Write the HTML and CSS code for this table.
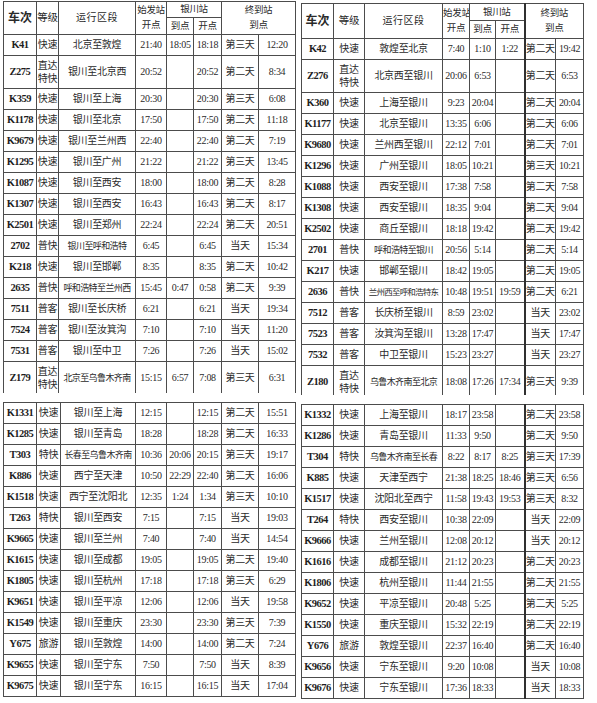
FILE: index.html
```html
<!DOCTYPE html>
<html lang="zh-CN">
<head>
<meta charset="utf-8">
<title>银川站列车时刻表</title>
<link rel="stylesheet" href="styles.css">
</head>
<body>
<div class="page">
  <div class="col col-left">
    <div class="clip clip-left">
      <table class="tt tl">
        <colgroup><col style="width:33px"><col style="width:22px"><col style="width:77px"><col style="width:31px"><col style="width:27px"><col style="width:28px"><col style="width:37px"><col style="width:37px"></colgroup>
        <thead>
          <tr class="h1"><th rowspan="2" class="hno">车次</th><th rowspan="2" class="hg">等级</th><th rowspan="2" class="hr">运行区段</th><th rowspan="2" class="hs">始发站<br>开点</th><th colspan="2" class="hs">银川站</th><th rowspan="2" colspan="2" class="hs">终到站<br>到点</th></tr>
          <tr class="h2"><th class="hs">到点</th><th class="hs">开点</th></tr>
        </thead>
        <tbody>
          <tr><td class="no">K41</td><td>快速</td><td>北京至敦煌</td><td>21:40</td><td>18:05</td><td>18:18</td><td>第三天</td><td>12:20</td></tr>
          <tr class="tall"><td class="no">Z275</td><td class="two">直达<br>特快</td><td>银川至北京西</td><td>20:52</td><td></td><td>20:52</td><td>第二天</td><td>8:34</td></tr>
          <tr><td class="no">K359</td><td>快速</td><td>银川至上海</td><td>20:30</td><td></td><td>20:30</td><td>第三天</td><td>6:08</td></tr>
          <tr><td class="no">K1178</td><td>快速</td><td>银川至北京</td><td>17:50</td><td></td><td>17:50</td><td>第二天</td><td>11:18</td></tr>
          <tr><td class="no">K9679</td><td>快速</td><td>银川至兰州西</td><td>22:40</td><td></td><td>22:40</td><td>第二天</td><td>7:19</td></tr>
          <tr><td class="no">K1295</td><td>快速</td><td>银川至广州</td><td>21:22</td><td></td><td>21:22</td><td>第三天</td><td>13:45</td></tr>
          <tr><td class="no">K1087</td><td>快速</td><td>银川至西安</td><td>18:00</td><td></td><td>18:00</td><td>第二天</td><td>8:28</td></tr>
          <tr><td class="no">K1307</td><td>快速</td><td>银川至西安</td><td>16:43</td><td></td><td>16:43</td><td>第二天</td><td>8:17</td></tr>
          <tr><td class="no">K2501</td><td>快速</td><td>银川至郑州</td><td>22:24</td><td></td><td>22:24</td><td>第二天</td><td>20:51</td></tr>
          <tr><td class="no">2702</td><td>普快</td><td class="lg">银川至呼和浩特</td><td>6:45</td><td></td><td>6:45</td><td>当天</td><td>15:34</td></tr>
          <tr><td class="no">K218</td><td>快速</td><td>银川至邯郸</td><td>8:35</td><td></td><td>8:35</td><td>第二天</td><td>10:42</td></tr>
          <tr><td class="no">2635</td><td>普快</td><td class="lg">呼和浩特至兰州西</td><td>15:45</td><td>0:47</td><td>0:58</td><td>第二天</td><td>9:39</td></tr>
          <tr><td class="no">7511</td><td>普客</td><td>银川至长庆桥</td><td>6:21</td><td></td><td>6:21</td><td>当天</td><td>19:34</td></tr>
          <tr><td class="no">7524</td><td>普客</td><td>银川至汝箕沟</td><td>7:10</td><td></td><td>7:10</td><td>当天</td><td>11:20</td></tr>
          <tr><td class="no">7531</td><td>普客</td><td>银川至中卫</td><td>7:26</td><td></td><td>7:26</td><td>当天</td><td>15:02</td></tr>
          <tr class="tall"><td class="no">Z179</td><td class="two">直达<br>特快</td><td class="lg">北京至乌鲁木齐南</td><td>15:15</td><td>6:57</td><td>7:08</td><td>第三天</td><td>6:31</td></tr>
        </tbody>
      </table>
    </div>
    <table class="tt tl">
      <colgroup><col style="width:33px"><col style="width:24px"><col style="width:75px"><col style="width:31px"><col style="width:27px"><col style="width:28px"><col style="width:37px"><col style="width:37px"></colgroup>
      <tbody>
        <tr><td class="no">K1331</td><td>快速</td><td>银川至上海</td><td>12:15</td><td></td><td>12:15</td><td>第二天</td><td>15:51</td></tr>
        <tr><td class="no">K1285</td><td>快速</td><td>银川至青岛</td><td>18:28</td><td></td><td>18:28</td><td>第二天</td><td>16:33</td></tr>
        <tr><td class="no">T303</td><td>特快</td><td class="lg">长春至乌鲁木齐南</td><td>10:36</td><td>20:06</td><td>20:15</td><td>第三天</td><td>19:17</td></tr>
        <tr><td class="no">K886</td><td>快速</td><td>西宁至天津</td><td>10:50</td><td>22:29</td><td>22:40</td><td>第二天</td><td>16:06</td></tr>
        <tr><td class="no">K1518</td><td>快速</td><td>西宁至沈阳北</td><td>12:35</td><td>1:24</td><td>1:34</td><td>第三天</td><td>10:10</td></tr>
        <tr><td class="no">T263</td><td>特快</td><td>银川至西安</td><td>7:15</td><td></td><td>7:15</td><td>当天</td><td>19:03</td></tr>
        <tr><td class="no">K9665</td><td>快速</td><td>银川至兰州</td><td>7:40</td><td></td><td>7:40</td><td>当天</td><td>14:54</td></tr>
        <tr><td class="no">K1615</td><td>快速</td><td>银川至成都</td><td>19:05</td><td></td><td>19:05</td><td>第二天</td><td>19:40</td></tr>
        <tr><td class="no">K1805</td><td>快速</td><td>银川至杭州</td><td>17:18</td><td></td><td>17:18</td><td>第三天</td><td>6:29</td></tr>
        <tr><td class="no">K9651</td><td>快速</td><td>银川至平凉</td><td>12:06</td><td></td><td>12:06</td><td>当天</td><td>19:58</td></tr>
        <tr><td class="no">K1549</td><td>快速</td><td>银川至重庆</td><td>23:30</td><td></td><td>23:30</td><td>第三天</td><td>7:39</td></tr>
        <tr><td class="no">Y675</td><td>旅游</td><td>银川至敦煌</td><td>14:00</td><td></td><td>14:00</td><td>第二天</td><td>7:24</td></tr>
        <tr><td class="no">K9655</td><td>快速</td><td>银川至宁东</td><td>7:50</td><td></td><td>7:50</td><td>当天</td><td>8:39</td></tr>
        <tr><td class="no">K9675</td><td>快速</td><td>银川至宁东</td><td>16:15</td><td></td><td>16:15</td><td>当天</td><td>17:04</td></tr>
      </tbody>
    </table>
  </div>

  <div class="col col-right">
    <div class="clip clip-right">
      <table class="tt tr-t">
        <colgroup><col style="width:32px"><col style="width:31px"><col style="width:78px"><col style="width:27px"><col style="width:26px"><col style="width:29px"><col style="width:31px"><col style="width:28px"></colgroup>
        <thead>
          <tr class="h1r"><th rowspan="2" class="hno">车次</th><th rowspan="2" class="hg">等级</th><th rowspan="2" class="hr">运行区段</th><th rowspan="2" class="hs">始发站<br>开点</th><th colspan="2" class="hs">银川站</th><th rowspan="2" colspan="2" class="hs d">终到站<br>到点</th></tr>
          <tr class="h2r"><th class="hs">到点</th><th class="hs">开点</th></tr>
        </thead>
        <tbody>
          <tr><td class="no">K42</td><td>快速</td><td>敦煌至北京</td><td>7:40</td><td>1:10</td><td>1:22</td><td class="d">第二天</td><td>19:42</td></tr>
          <tr class="tall"><td class="no">Z276</td><td class="two">直达<br>特快</td><td>北京西至银川</td><td>20:06</td><td>6:53</td><td></td><td class="d">第二天</td><td>6:53</td></tr>
          <tr><td class="no">K360</td><td>快速</td><td>上海至银川</td><td>9:23</td><td>20:04</td><td></td><td class="d">第二天</td><td>20:04</td></tr>
          <tr><td class="no">K1177</td><td>快速</td><td>北京至银川</td><td>13:35</td><td>6:06</td><td></td><td class="d">第二天</td><td>6:06</td></tr>
          <tr><td class="no">K9680</td><td>快速</td><td>兰州西至银川</td><td>22:12</td><td>7:01</td><td></td><td class="d">第二天</td><td>7:01</td></tr>
          <tr><td class="no">K1296</td><td>快速</td><td>广州至银川</td><td>18:05</td><td>10:21</td><td></td><td class="d">第三天</td><td>10:21</td></tr>
          <tr><td class="no">K1088</td><td>快速</td><td>西安至银川</td><td>17:38</td><td>7:58</td><td></td><td class="d">第二天</td><td>7:58</td></tr>
          <tr><td class="no">K1308</td><td>快速</td><td>西安至银川</td><td>18:35</td><td>9:04</td><td></td><td class="d">第二天</td><td>9:04</td></tr>
          <tr><td class="no">K2502</td><td>快速</td><td>商丘至银川</td><td>18:18</td><td>19:42</td><td></td><td class="d">第二天</td><td>19:42</td></tr>
          <tr><td class="no">2701</td><td>普快</td><td class="lg">呼和浩特至银川</td><td>20:56</td><td>5:14</td><td></td><td class="d">第二天</td><td>5:14</td></tr>
          <tr><td class="no">K217</td><td>快速</td><td>邯郸至银川</td><td>18:42</td><td>19:05</td><td></td><td class="d">第二天</td><td>19:05</td></tr>
          <tr><td class="no">2636</td><td>普快</td><td class="xl">兰州西至呼和浩特东</td><td>10:48</td><td>19:51</td><td>19:59</td><td class="d">第二天</td><td>6:21</td></tr>
          <tr><td class="no">7512</td><td>普客</td><td>长庆桥至银川</td><td>8:59</td><td>23:02</td><td></td><td class="d">当天</td><td>23:02</td></tr>
          <tr><td class="no">7523</td><td>普客</td><td>汝箕沟至银川</td><td>13:28</td><td>17:47</td><td></td><td class="d">当天</td><td>17:47</td></tr>
          <tr><td class="no">7532</td><td>普客</td><td>中卫至银川</td><td>15:23</td><td>23:27</td><td></td><td class="d">当天</td><td>23:27</td></tr>
          <tr class="tall"><td class="no">Z180</td><td class="two">直达<br>特快</td><td class="lg">乌鲁木齐南至北京</td><td>18:08</td><td>17:26</td><td>17:34</td><td class="d">第三天</td><td>9:39</td></tr>
        </tbody>
      </table>
    </div>
    <table class="tt tr-t">
      <colgroup><col style="width:32px"><col style="width:31px"><col style="width:78px"><col style="width:27px"><col style="width:26px"><col style="width:29px"><col style="width:31px"><col style="width:28px"></colgroup>
      <tbody>
        <tr><td class="no">K1332</td><td>快速</td><td>上海至银川</td><td>18:17</td><td>23:58</td><td></td><td class="d">第二天</td><td>23:58</td></tr>
        <tr><td class="no">K1286</td><td>快速</td><td>青岛至银川</td><td>11:33</td><td>9:50</td><td></td><td class="d">第二天</td><td>9:50</td></tr>
        <tr><td class="no">T304</td><td>特快</td><td class="lg">乌鲁木齐南至长春</td><td>8:22</td><td>8:17</td><td>8:25</td><td class="d">第三天</td><td>17:39</td></tr>
        <tr><td class="no">K885</td><td>快速</td><td>天津至西宁</td><td>21:38</td><td>18:25</td><td>18:46</td><td class="d">第三天</td><td>6:56</td></tr>
        <tr><td class="no">K1517</td><td>快速</td><td>沈阳北至西宁</td><td>11:58</td><td>19:43</td><td>19:53</td><td class="d">第三天</td><td>8:32</td></tr>
        <tr><td class="no">T264</td><td>特快</td><td>西安至银川</td><td>10:38</td><td>22:09</td><td></td><td class="d">当天</td><td>22:09</td></tr>
        <tr><td class="no">K9666</td><td>快速</td><td>兰州至银川</td><td>12:08</td><td>20:12</td><td></td><td class="d">当天</td><td>20:12</td></tr>
        <tr><td class="no">K1616</td><td>快速</td><td>成都至银川</td><td>21:12</td><td>20:23</td><td></td><td class="d">第二天</td><td>20:23</td></tr>
        <tr><td class="no">K1806</td><td>快速</td><td>杭州至银川</td><td>11:44</td><td>21:55</td><td></td><td class="d">第二天</td><td>21:55</td></tr>
        <tr><td class="no">K9652</td><td>快速</td><td>平凉至银川</td><td>20:48</td><td>5:25</td><td></td><td class="d">第二天</td><td>5:25</td></tr>
        <tr><td class="no">K1550</td><td>快速</td><td>重庆至银川</td><td>15:32</td><td>22:19</td><td></td><td class="d">第二天</td><td>22:19</td></tr>
        <tr><td class="no">Y676</td><td>旅游</td><td>敦煌至银川</td><td>22:37</td><td>16:40</td><td></td><td class="d">第二天</td><td>16:40</td></tr>
        <tr><td class="no">K9656</td><td>快速</td><td>宁东至银川</td><td>9:20</td><td>10:08</td><td></td><td class="d">当天</td><td>10:08</td></tr>
        <tr><td class="no">K9676</td><td>快速</td><td>宁东至银川</td><td>17:36</td><td>18:33</td><td></td><td class="d">当天</td><td>18:33</td></tr>
      </tbody>
    </table>
  </div>
</div>
</body>
</html>
```

FILE: styles.css
```css
* { box-sizing: border-box; }
html, body { margin: 0; padding: 0; background: #ffffff; }
body {
  font-family: "Liberation Serif", "Noto Sans CJK SC", serif;
  color: #2a2a2a;
  font-size: 10px;
}
.page {
  display: flex;
  gap: 5px;
  padding: 1px 0 0 3px;
  width: 597px;
  height: 703px;
  overflow: hidden;
}
.col { display: flex; flex-direction: column; }
.col-left { width: 293px; gap: 9px; }
.col-right { width: 283px; padding-top: 2px; gap: 9px; }
.clip { overflow: hidden; }
.clip-left { height: 392px; }
.clip-right { height: 392px; }

.tt {
  border-collapse: collapse;
  table-layout: fixed;
}
.tl { width: 293px; }
.tr-t { width: 283px; }

.tt td, .tt th {
  border: 1px solid #4c4c4c;
  padding: 0;
  text-align: center;
  vertical-align: middle;
  font-weight: normal;
  white-space: nowrap;
  overflow: hidden;
  line-height: 12px;
  letter-spacing: -0.3px;
}
.tt tbody tr { height: 21px; }
.tt tbody tr.tall { height: 33px; }

.h1 { height: 16px; }
.h2 { height: 17px; }
.h1r { height: 17px; }
.h2r { height: 18px; }

.tt .hno { font-weight: bold; font-size: 12px; letter-spacing: 0; }
.tt .hg { font-size: 10.5px; }
.tt .hr { font-size: 10px; letter-spacing: 0.5px; }
.tt .hs { font-size: 9.5px; line-height: 15px; }

.tt .no { font-weight: bold; font-size: 10.5px; letter-spacing: -0.5px; color: #1e1e1e; }
.tt .two { line-height: 13px; }
.tt .lg { font-size: 9px; letter-spacing: -0.6px; }
.tt .xl { font-size: 8.5px; letter-spacing: -0.8px; }

.tr-t .d { border-left: 2px solid #303030; }
```
